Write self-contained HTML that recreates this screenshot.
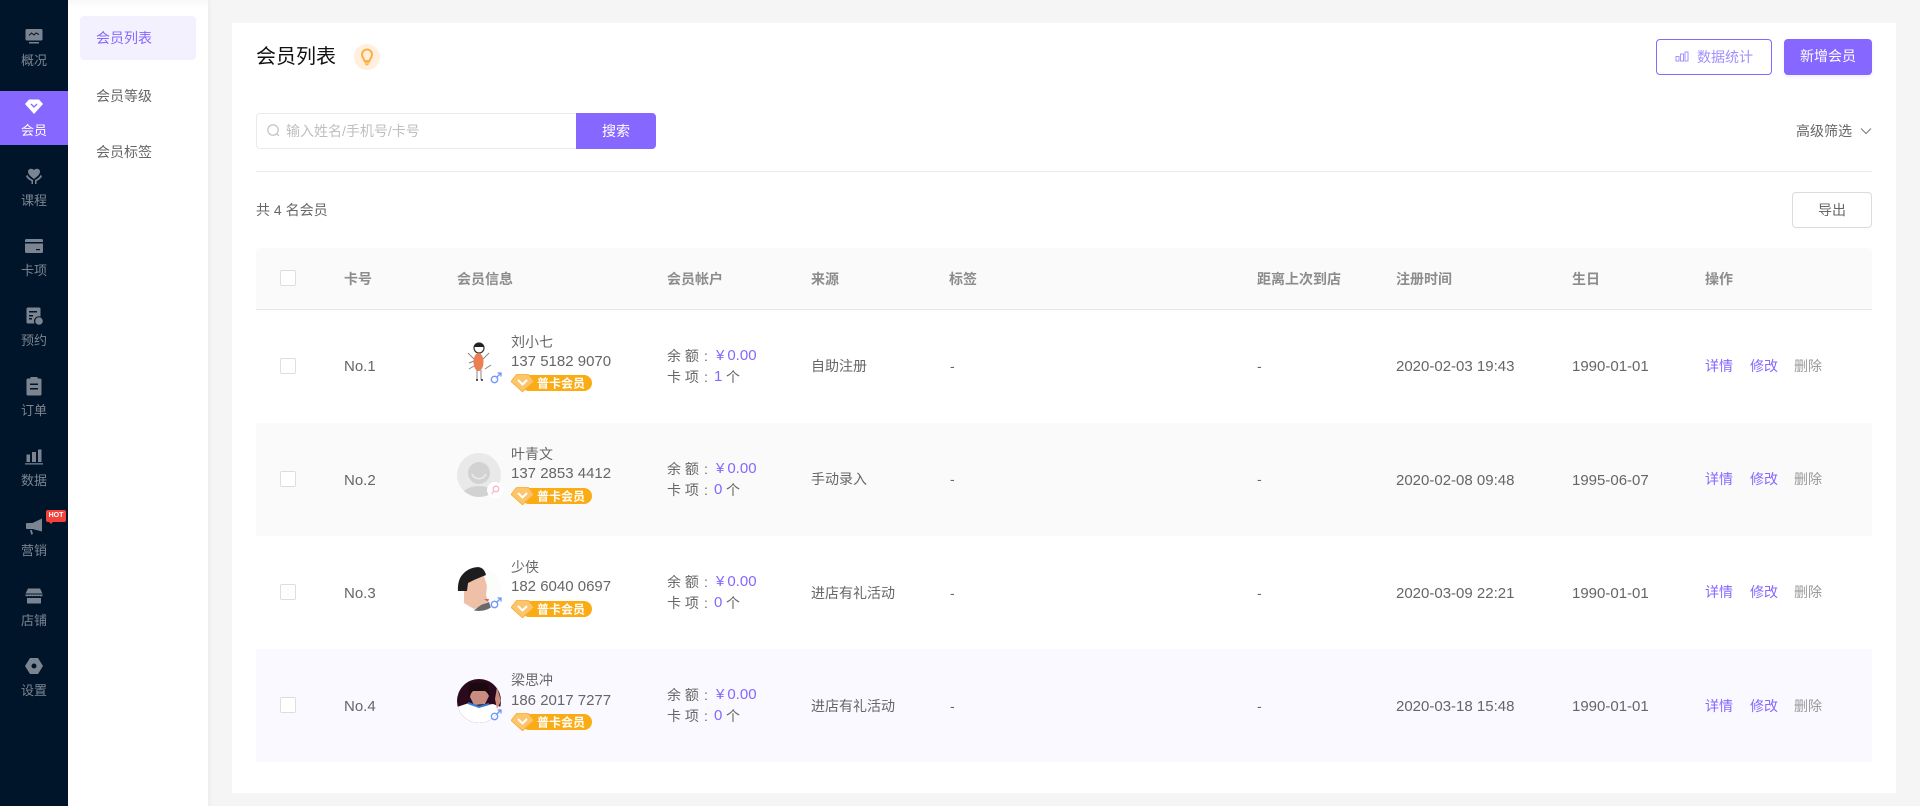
<!DOCTYPE html>
<html lang="zh"><head><meta charset="utf-8"><title>会员列表</title>
<style>
html,body{margin:0;padding:0;width:1920px;height:806px;overflow:hidden;background:#f5f5f5;font-family:"Liberation Sans","Noto Sans CJK SC",sans-serif;font-size:14px;color:#666}
.a,.t{position:absolute}
.t{line-height:20px;height:20px;white-space:nowrap}
#side{position:absolute;left:0;top:0;width:68px;height:806px;background:#00152a}
#sub{position:absolute;left:68px;top:0;width:140px;height:806px;background:#fff;box-shadow:2px 0 4px rgba(0,0,0,.04)}
.nav{position:absolute;left:0;width:68px;text-align:center;font-size:13px;line-height:18px;color:#7b8591;white-space:nowrap}
.ni{position:absolute;left:24px;width:20px;height:20px}
.ni *{fill:#7b8591}
.r{position:absolute;left:256px;width:1616px;height:113px}
.cb{position:absolute;width:14px;height:14px;border:1px solid #dedede;border-radius:2px;background:#fff}
.h{font-weight:bold;color:#8c8c8c;font-size:14px;top:269px}
.p{color:#8667ff}
.d{font-size:15px;color:#666}
.m{font-size:15px}
.badge{position:absolute;left:255px;top:64px;width:81px;height:18px}
</style></head><body>

<div id="side">
<svg class="ni" style="top:26px" viewBox="0 0 20 20"><path d="M3 3h14a1.500 1.500 0 0 1 1.500 1.500V13a1.500 1.500 0 0 1-1.500 1.500H3A1.500 1.500 0 0 1 1.500 13V4.500A1.500 1.500 0 0 1 3 3zM5 16h10v1.500H5z"/><path d="M5 9.500l2.500-2.500 2.500 2 2-2 3 1.500" style="fill:none;stroke:#00152a;stroke-width:1"/></svg>
<div class="nav" style="top:52px">概况</div>

<div class="a" style="left:0;top:91px;width:68px;height:54px;background:#8667ff"></div>
<svg class="a" style="left:24px;top:96px" width="20" height="20" viewBox="0 0 20 20"><path d="M5 3.500h10l4 4.500-9 10L1 8z" fill="#fff"/><path d="M7 8l3 3 3-3" fill="none" stroke="#8667ff" stroke-width="1.300"/></svg>
<div class="nav" style="top:122px;color:#fff">会员</div>

<svg class="ni" style="top:166px" viewBox="0 0 20 20"><path d="M10 13C6 10 4 8 4 5.500 4 3 7.500 1.500 10 4c2.500-2.500 6-1 6 1.500 0 2.500-2 4.500-6 7.500z"/><path d="M2 10l1.500-1c1 2.500 3.500 4 5.500 5v4H7.500v-3C5 14 3 12.500 2 10zM18 10l-1.500-1c-1 2.500-3.500 4-5.500 5v4h1.500v-3c2.500-1 4.500-2.500 5.500-5z"/></svg>
<div class="nav" style="top:192px">课程</div>

<svg class="ni" style="top:236px" viewBox="0 0 20 20"><path d="M2.500 3h15A1.500 1.500 0 0 1 19 4.500V6H1V4.500A1.500 1.500 0 0 1 2.500 3zM1 7.500h18v8a1.500 1.500 0 0 1-1.500 1.500h-15A1.500 1.500 0 0 1 1 15.500z"/><path d="M12 13h4v1.200h-4z" style="fill:#00152a"/></svg>
<div class="nav" style="top:262px">卡项</div>

<svg class="ni" style="top:306px" viewBox="0 0 20 20"><path d="M4 1.500h11A1.500 1.500 0 0 1 16.500 3v7.500a5 5 0 0 0-6 7H4A1.500 1.500 0 0 1 2.500 16V3A1.500 1.500 0 0 1 4 1.500z"/><path d="M5 5h8v1.500H5zM5 9h4v1.500H5zM5 12h3v1.500H5z" style="fill:#00152a"/><circle cx="15" cy="15" r="3.800"/></svg>
<div class="nav" style="top:332px">预约</div>

<svg class="ni" style="top:376px" viewBox="0 0 20 20"><path d="M4 2.500h2.500V1h7v1.500H16A1.500 1.500 0 0 1 17.500 4v14a1.500 1.500 0 0 1-1.500 1.500H4A1.500 1.500 0 0 1 2.500 18V4A1.500 1.500 0 0 1 4 2.500z"/><path d="M6 7.500h8V9H6zM6 12h8v1.500H6z" style="fill:#00152a"/></svg>
<div class="nav" style="top:402px">订单</div>

<svg class="ni" style="top:446px" viewBox="0 0 20 20"><path d="M2.500 8.500h3.500V16H2.500zM8 6h4v10H8zM14 3.500h3.500V16H14zM1 17.200h18v1.300H1z"/></svg>
<div class="nav" style="top:472px">数据</div>

<svg class="ni" style="top:516px" viewBox="0 0 20 20"><path d="M18 2.500v13L8.500 13H3a1 1 0 0 1-1-1V8a1 1 0 0 1 1-1h5.500zM6 14l1.800 0 1.200 4-1.800.6z"/></svg>
<div class="nav" style="top:542px">营销</div>
<div class="a" style="left:46px;top:510px;width:20px;height:12px;background:#f5413c;border-radius:2px;color:#fff;font:bold 7px/12px 'Liberation Sans',sans-serif;text-align:center">HOT</div>
<div class="a" style="left:49px;top:522px;border:2px solid transparent;border-top:2px solid #f5413c;border-bottom:0"></div>

<svg class="ni" style="top:586px" viewBox="0 0 20 20"><path d="M4 2.500h12l2.500 5H1.500zM1.500 8.500h17v1.200a2 2 0 0 1-3 0 2.300 2.300 0 0 1-2.800 0 2.300 2.300 0 0 1-2.700 0 2.300 2.300 0 0 1-2.800 0 2.300 2.300 0 0 1-2.700 0 2 2 0 0 1-3 0zM3 12h14v5.500H3z"/></svg>
<div class="nav" style="top:612px">店铺</div>

<svg class="ni" style="top:656px" viewBox="0 0 20 20"><path fill-rule="evenodd" d="M6 2h8l5 8-5 8H6l-5-8zM10 7.500a2.500 2.500 0 1 0 0 5 2.500 2.500 0 0 0 0-5z"/></svg>
<div class="nav" style="top:682px">设置</div>
</div>

<div id="sub">
<div class="a" style="left:0;top:0;width:140px;height:8px;background:linear-gradient(#f8f8f8,#fff)"></div>
<div class="a" style="left:12px;top:16px;width:116px;height:44px;background:#f4f1ff;border-radius:4px"></div>
<div class="t p" style="left:28px;top:28px">会员列表</div>
<div class="t" style="left:28px;top:86px;color:#666">会员等级</div>
<div class="t" style="left:28px;top:142px;color:#666">会员标签</div>
</div>

<div class="a" style="left:232px;top:23px;width:1664px;height:770px;background:#fff"></div>

<div class="t" style="left:256px;top:45px;font-size:20px;line-height:24px;height:24px;color:#111">会员列表</div>
<svg class="a" style="left:354px;top:44px" width="26" height="26" viewBox="0 0 26 26"><circle cx="13" cy="13" r="13" fill="#ffefdc"/><path d="M10.500 17c0-2-2.500-3-2.500-6.500a5 5 0 0 1 10 0C18 14 15.500 15 15.500 17z" fill="none" stroke="#fdae45" stroke-width="2"/><path d="M10.500 18.800h5M11.500 20.600h3" stroke="#fdae45" stroke-width="1.400"/></svg>

<div class="a" style="left:1656px;top:39px;width:114px;height:34px;border:1px solid #8667ff;border-radius:4px;background:#fff"></div>
<svg class="a" style="left:1675px;top:49px" width="14" height="14" viewBox="0 0 14 14"><path d="M1 7.500h3v4.500H1zM5.500 5h3v7h-3zM10 3h3v9h-3z" fill="none" stroke="#a694ff" stroke-width="1"/></svg>
<div class="t" style="left:1697px;top:47px;color:#a28fff">数据统计</div>
<div class="a" style="left:1784px;top:39px;width:88px;height:36px;background:#8667ff;border-radius:4px;color:#fff;text-align:center;line-height:35px;box-shadow:0 2px 3px rgba(134,103,255,.12)">新增会员</div>

<div class="a" style="left:256px;top:113px;width:320px;height:34px;border:1px solid #eaeaea;border-right:0;border-radius:4px 0 0 4px"></div>
<svg class="a" style="left:266px;top:123px" width="15" height="15" viewBox="0 0 15 15"><circle cx="7" cy="7" r="5.200" fill="none" stroke="#bdbdbd" stroke-width="1.100"/><path d="M10.800 10.800l2.200 2.200" stroke="#bdbdbd" stroke-width="1.100"/></svg>
<div class="t" style="left:286px;top:121px;color:#bfbfbf">输入姓名/手机号/卡号</div>
<div class="a" style="left:576px;top:113px;width:80px;height:36px;background:#8667ff;border-radius:0 4px 4px 0;color:#fff;text-align:center;line-height:36px">搜索</div>

<div class="t" style="left:1796px;top:121px;color:#666">高级筛选</div>
<svg class="a" style="left:1860px;top:127px" width="12" height="8" viewBox="0 0 12 8"><path d="M1 1.500l5 5 5-5" fill="none" stroke="#777" stroke-width="1"/></svg>

<div class="a" style="left:256px;top:171px;width:1616px;height:1px;background:#eaeaea"></div>
<div class="t" style="left:256px;top:200px;color:#666">共 4 名会员</div>
<div class="a" style="left:1792px;top:192px;width:78px;height:34px;border:1px solid #dcdcdc;border-radius:4px;text-align:center;line-height:34px;color:#666">导出</div>

<div class="a" style="left:256px;top:248px;width:1616px;height:61px;background:#fafafa;border-bottom:1px solid #e6e6e6;border-radius:4px 4px 0 0"></div>
<div class="cb" style="left:280px;top:270px"></div>
<div class="t h" style="left:344px">卡号</div>
<div class="t h" style="left:457px">会员信息</div>
<div class="t h" style="left:667px">会员帐户</div>
<div class="t h" style="left:811px">来源</div>
<div class="t h" style="left:949px">标签</div>
<div class="t h" style="left:1257px">距离上次到店</div>
<div class="t h" style="left:1396px">注册时间</div>
<div class="t h" style="left:1572px">生日</div>
<div class="t h" style="left:1705px">操作</div>

<!-- Row 1 -->
<div class="r" style="top:310px;background:#fff">
<div class="cb" style="left:24px;top:48px"></div>
<div class="t d" style="left:88px;top:47px">No.1</div>
<svg class="a" style="left:201px;top:31px" width="44" height="44" viewBox="0 0 44 44"><circle cx="22" cy="22" r="22" fill="#fff"/><circle cx="22" cy="7" r="5" fill="#fff" stroke="#333" stroke-width="1.200"/><path d="M17 6c0-5 10-5 10 0z" fill="#222"/><ellipse cx="21.500" cy="21" rx="5" ry="9" fill="#ea7f52"/><path d="M20 29v10M24 29v10M11 12l6 6M12 22l5-2M12 28l5-3M32 12l-6 6M34 24l-6 4" stroke="#888" stroke-width="1"/><path d="M19 39h2M24 39h2" stroke="#222" stroke-width="1.500"/></svg>
<svg class="a" style="left:233px;top:61px" width="14" height="14" viewBox="0 0 14 14"><circle cx="5.500" cy="8.500" r="3.200" fill="none" stroke="#6f95ff" stroke-width="1.300"/><path d="M8 6l4-4M8.500 2H12v3.500" fill="none" stroke="#6f95ff" stroke-width="1.300"/></svg>
<div class="t" style="left:255px;top:22px">刘小七</div>
<div class="t m" style="left:255px;top:42px">137 5182 9070</div>
<svg class="badge" viewBox="0 0 81 18"><rect x="10" y="1" width="71" height="16" rx="8" fill="#fbac14"/><path d="M5.500 .5h12L23 7.500 11.500 17.800 0 7.500z" fill="#fcc56c" stroke="#f9ab26" stroke-width=".8"/><path d="M7 6l4.500 4.500L16 6" fill="none" stroke="#fff" stroke-width="2"/><text x="26" y="13.500" font-size="12" font-weight="bold" fill="#fff" font-family="Liberation Sans,Noto Sans CJK SC,sans-serif">普卡会员</text></svg>
<div class="t" style="left:411px;top:36px">余 额</div><div class="t" style="left:448px;top:36px">:</div><div class="t p m" style="left:460px;top:36px">¥<span style="margin-left:3px">0.00</span></div>
<div class="t" style="left:411px;top:57px">卡 项</div><div class="t" style="left:448px;top:57px">:</div><div class="t p m" style="left:458px;top:57px">1</div><div class="t" style="left:470px;top:57px">个</div>
<div class="t" style="left:555px;top:46px">自助注册</div>
<div class="t" style="left:694px;top:46px">-</div>
<div class="t" style="left:1001px;top:46px">-</div>
<div class="t d" style="left:1140px;top:47px">2020-02-03 19:43</div>
<div class="t d" style="left:1316px;top:47px">1990-01-01</div>
<div class="t p" style="left:1449px;top:46px">详情</div><div class="t p" style="left:1494px;top:46px">修改</div><div class="t" style="left:1538px;top:46px;color:#999">删除</div>
</div>

<!-- Row 2 -->
<div class="r" style="top:423px;background:#fafafa">
<div class="cb" style="left:24px;top:48px"></div>
<div class="t d" style="left:88px;top:48px">No.2</div>
<svg class="a" style="left:201px;top:30px" width="44" height="44" viewBox="0 0 44 44"><defs><clipPath id="c2"><circle cx="22" cy="22" r="22"/></clipPath></defs><circle cx="22" cy="22" r="22" fill="#e9e9e9"/><g clip-path="url(#c2)"><circle cx="22" cy="20" r="11" fill="#d2d2d2"/><path d="M15 21a7.500 7.500 0 0 0 14 0" fill="none" stroke="#ececec" stroke-width="1.500"/><ellipse cx="22" cy="44" rx="18" ry="11" fill="#d2d2d2"/></g></svg>
<svg class="a" style="left:231px;top:59px" width="16" height="16" viewBox="0 0 16 16"><circle cx="8" cy="8" r="8" fill="#fff"/><circle cx="9" cy="7" r="2.800" fill="none" stroke="#ffb3cf" stroke-width="1.300"/><path d="M7 9l-2.500 3" stroke="#ffb3cf" stroke-width="1.300"/></svg>
<div class="t" style="left:255px;top:21px">叶青文</div>
<div class="t m" style="left:255px;top:41px">137 2853 4412</div>
<svg class="badge" viewBox="0 0 81 18"><rect x="10" y="1" width="71" height="16" rx="8" fill="#fbac14"/><path d="M5.500 .5h12L23 7.500 11.500 17.800 0 7.500z" fill="#fcc56c" stroke="#f9ab26" stroke-width=".8"/><path d="M7 6l4.500 4.500L16 6" fill="none" stroke="#fff" stroke-width="2"/><text x="26" y="13.500" font-size="12" font-weight="bold" fill="#fff" font-family="Liberation Sans,Noto Sans CJK SC,sans-serif">普卡会员</text></svg>
<div class="t" style="left:411px;top:36px">余 额</div><div class="t" style="left:448px;top:36px">:</div><div class="t p m" style="left:460px;top:36px">¥<span style="margin-left:3px">0.00</span></div>
<div class="t" style="left:411px;top:57px">卡 项</div><div class="t" style="left:448px;top:57px">:</div><div class="t p m" style="left:458px;top:57px">0</div><div class="t" style="left:470px;top:57px">个</div>
<div class="t" style="left:555px;top:46px">手动录入</div>
<div class="t" style="left:694px;top:46px">-</div>
<div class="t" style="left:1001px;top:46px">-</div>
<div class="t d" style="left:1140px;top:48px">2020-02-08 09:48</div>
<div class="t d" style="left:1316px;top:48px">1995-06-07</div>
<div class="t p" style="left:1449px;top:46px">详情</div><div class="t p" style="left:1494px;top:46px">修改</div><div class="t" style="left:1538px;top:46px;color:#999">删除</div>
</div>

<!-- Row 3 -->
<div class="r" style="top:536px;background:#fff">
<div class="cb" style="left:24px;top:48px"></div>
<div class="t d" style="left:88px;top:48px">No.3</div>
<svg class="a" style="left:201px;top:31px" width="44" height="44" viewBox="0 0 44 44"><defs><clipPath id="c3"><circle cx="22" cy="22" r="22"/></clipPath></defs><g clip-path="url(#c3)"><rect width="44" height="44" fill="#fbfdfa"/><path d="M7 20l4-5 16-6 3 10-1 9 2 6-6 5-8 3-10-6z" fill="#eec0a8"/><path d="M1 24C0 8 10 0 20 0c6 0 8 4 9 8l-12 5-6 3-1 8z" fill="#1d1d1f"/><path d="M16 44l8-6 8-3 3 9z" fill="#6a6a6a"/><path d="M27 32l5 0-1 3z" fill="#c86a6a"/></g></svg>
<svg class="a" style="left:233px;top:60px" width="14" height="14" viewBox="0 0 14 14"><circle cx="5.500" cy="8.500" r="3.200" fill="none" stroke="#6f95ff" stroke-width="1.300"/><path d="M8 6l4-4M8.500 2H12v3.500" fill="none" stroke="#6f95ff" stroke-width="1.300"/></svg>
<div class="t" style="left:255px;top:21px">少侠</div>
<div class="t m" style="left:255px;top:41px">182 6040 0697</div>
<svg class="badge" viewBox="0 0 81 18"><rect x="10" y="1" width="71" height="16" rx="8" fill="#fbac14"/><path d="M5.500 .5h12L23 7.500 11.500 17.800 0 7.500z" fill="#fcc56c" stroke="#f9ab26" stroke-width=".8"/><path d="M7 6l4.500 4.500L16 6" fill="none" stroke="#fff" stroke-width="2"/><text x="26" y="13.500" font-size="12" font-weight="bold" fill="#fff" font-family="Liberation Sans,Noto Sans CJK SC,sans-serif">普卡会员</text></svg>
<div class="t" style="left:411px;top:36px">余 额</div><div class="t" style="left:448px;top:36px">:</div><div class="t p m" style="left:460px;top:36px">¥<span style="margin-left:3px">0.00</span></div>
<div class="t" style="left:411px;top:57px">卡 项</div><div class="t" style="left:448px;top:57px">:</div><div class="t p m" style="left:458px;top:57px">0</div><div class="t" style="left:470px;top:57px">个</div>
<div class="t" style="left:555px;top:47px">进店有礼活动</div>
<div class="t" style="left:694px;top:47px">-</div>
<div class="t" style="left:1001px;top:47px">-</div>
<div class="t d" style="left:1140px;top:48px">2020-03-09 22:21</div>
<div class="t d" style="left:1316px;top:48px">1990-01-01</div>
<div class="t p" style="left:1449px;top:46px">详情</div><div class="t p" style="left:1494px;top:46px">修改</div><div class="t" style="left:1538px;top:46px;color:#999">删除</div>
</div>

<!-- Row 4 -->
<div class="r" style="top:649px;background:#f9f9ff">
<div class="cb" style="left:24px;top:48px"></div>
<div class="t d" style="left:88px;top:48px">No.4</div>
<svg class="a" style="left:201px;top:30px" width="44" height="44" viewBox="0 0 44 44"><defs><clipPath id="c4"><circle cx="22" cy="22" r="22"/></clipPath></defs><g clip-path="url(#c4)"><rect width="44" height="44" fill="#2a0a1c"/><path d="M15 10h13l4 7-4 8-11 1-4-8z" fill="#c98c80"/><path d="M12 4h18l3 12-5-4H16l-5 6z" fill="#1a0a10"/><path d="M0 28l12-4 10 3 14-2 8 3v16H0z" fill="#fff"/><path d="M11 24l11 4 10-3" fill="none" stroke="#2c7bd6" stroke-width="2"/><path d="M40 8l4 14-4 8-2-10z" fill="#c98c80"/></g></svg>
<svg class="a" style="left:233px;top:59px" width="14" height="14" viewBox="0 0 14 14"><circle cx="5.500" cy="8.500" r="3.200" fill="none" stroke="#6f95ff" stroke-width="1.300"/><path d="M8 6l4-4M8.500 2H12v3.500" fill="none" stroke="#6f95ff" stroke-width="1.300"/></svg>
<div class="t" style="left:255px;top:21px">梁思冲</div>
<div class="t m" style="left:255px;top:42px">186 2017 7277</div>
<svg class="badge" viewBox="0 0 81 18"><rect x="10" y="1" width="71" height="16" rx="8" fill="#fbac14"/><path d="M5.500 .5h12L23 7.500 11.500 17.800 0 7.500z" fill="#fcc56c" stroke="#f9ab26" stroke-width=".8"/><path d="M7 6l4.500 4.500L16 6" fill="none" stroke="#fff" stroke-width="2"/><text x="26" y="13.500" font-size="12" font-weight="bold" fill="#fff" font-family="Liberation Sans,Noto Sans CJK SC,sans-serif">普卡会员</text></svg>
<div class="t" style="left:411px;top:36px">余 额</div><div class="t" style="left:448px;top:36px">:</div><div class="t p m" style="left:460px;top:36px">¥<span style="margin-left:3px">0.00</span></div>
<div class="t" style="left:411px;top:57px">卡 项</div><div class="t" style="left:448px;top:57px">:</div><div class="t p m" style="left:458px;top:57px">0</div><div class="t" style="left:470px;top:57px">个</div>
<div class="t" style="left:555px;top:47px">进店有礼活动</div>
<div class="t" style="left:694px;top:47px">-</div>
<div class="t" style="left:1001px;top:47px">-</div>
<div class="t d" style="left:1140px;top:48px">2020-03-18 15:48</div>
<div class="t d" style="left:1316px;top:48px">1990-01-01</div>
<div class="t p" style="left:1449px;top:47px">详情</div><div class="t p" style="left:1494px;top:47px">修改</div><div class="t" style="left:1538px;top:47px;color:#999">删除</div>
</div>
</body></html>
